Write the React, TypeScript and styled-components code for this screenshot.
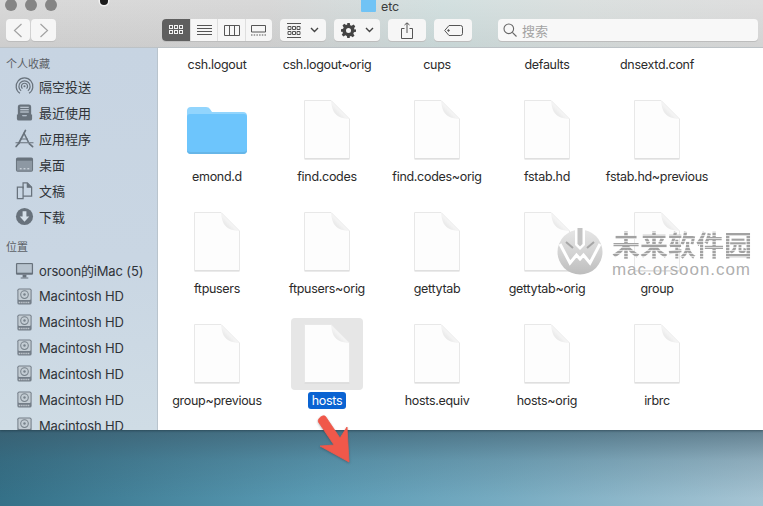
import React from 'react';
import styled, { createGlobalStyle } from 'styled-components';

const GlobalStyle = createGlobalStyle`
  html, body {
    margin: 0;
    padding: 0;
    overflow: hidden;
  }
  body {
    font-family: Inter, "Noto Sans CJK SC", sans-serif;
  }
`;

const Page = styled.div`
  position: relative;
  width: 763px;
  height: 506px;
  overflow: hidden;
  display: flex;
  flex-direction: column;
`;

const FinderWindow = styled.div`
  position: relative;
  z-index: 1;
  height: 430px;
  display: flex;
  flex-direction: column;
  flex: none;
  box-shadow: 0 1px 2px rgba(20, 40, 50, 0.45);
`;

const Chrome = styled.div`
  height: 48px;
  flex: none;
  display: flex;
  flex-direction: column;
  background:
    linear-gradient(180deg, rgba(255, 255, 255, 0.12) 0%, rgba(0, 0, 0, 0.03) 100%),
    linear-gradient(90deg, #d4d4d4 0%, #d3d3d3 35%, #cddcdc 58%, #d6dcdb 75%, #dadada 100%);
  box-shadow: inset 0 -1px 0 #bcc2c6;
`;

const TitleBar = styled.div`
  height: 19px;
  display: grid;
  grid-template-columns: 1fr auto 1fr;
  align-items: start;
`;

const Lights = styled.div`
  display: flex;
  gap: 8px;
  margin: -1px 0 0 5px;
`;

const Light = styled.span`
  width: 12px;
  height: 12px;
  border-radius: 50%;
  background: #858585;
`;

const Title = styled.div`
  display: flex;
  align-items: flex-start;
  gap: 5px;
  margin-right: 3px;
  font-size: 12.5px;
  line-height: 13px;
  letter-spacing: -0.2px;
  color: #3c3c3c;
`;

const Toolbar = styled.div`
  display: flex;
  align-items: flex-start;
  padding-left: 6px;
`;

const Btn = styled.div<{ $w: number; $ml?: number }>`
  width: ${({ $w }) => $w}px;
  height: 22px;
  margin-left: ${({ $ml }) => $ml || 0}px;
  flex: none;
  display: flex;
  align-items: center;
  justify-content: center;
  gap: ${({ $w }) => ($w > 40 ? 9 : 0)}px;
  background: #f6f6f6;
  border-radius: 4px;
  box-shadow: 0 1px 0 #bdbdbd;
  color: #555;
`;

const Segmented = styled.div`
  margin-left: 106px;
  width: 110px;
  height: 22px;
  flex: none;
  display: flex;
  border-radius: 4px;
  overflow: hidden;
  background: #f6f6f6;
  box-shadow: 0 1px 0 #bdbdbd;
`;

const Segment = styled.div<{ $on?: boolean; $w: number }>`
  width: ${({ $w }) => $w}px;
  display: flex;
  align-items: center;
  justify-content: center;
  background: ${({ $on }) => ($on ? '#5f5f5f' : 'transparent')};
  color: ${({ $on }) => ($on ? '#f2f2f2' : '#555')};
  border-left: ${({ $on }) => ($on ? 'none' : '1px solid #dedede')};
`;

const SearchBox = styled.div`
  margin-left: 26px;
  width: 260px;
  height: 22px;
  flex: none;
  display: flex;
  align-items: center;
  gap: 5px;
  padding-left: 5px;
  box-sizing: border-box;
  background: #f8f8f8;
  border-radius: 4px;
  box-shadow: 0 1px 0 #bdbdbd;
  font-size: 13px;
  color: #a3a3a3;
`;

const Body = styled.div`
  flex: 1;
  min-height: 0;
  display: flex;
`;

const Sidebar = styled.aside`
  width: 158px;
  flex: none;
  overflow: hidden;
  background: linear-gradient(180deg, #c7d4e2 0%, #c9d6e3 55%, #cfdce5 100%);
  box-shadow: inset -1px 0 0 #b9c4cd;
`;

const SideHeader = styled.div<{ $mt: number }>`
  height: 20px;
  margin-top: ${({ $mt }) => $mt}px;
  padding-left: 6px;
  font-size: 11px;
  line-height: 20px;
  color: #5c6166;
`;

const SideItem = styled.div<{ $tight?: boolean }>`
  height: 25.9px;
  display: flex;
  align-items: center;
  gap: 5px;
  padding-left: 15px;
  font-size: 13px;
  color: #2f3338;
  white-space: nowrap;
  letter-spacing: ${({ $tight }) => ($tight ? '-0.15px' : '0')};
`;

const SideIcon = styled.svg`
  width: 19px;
  height: 19px;
  flex: none;
  color: #68727c;
`;

const Main = styled.main`
  flex: 1;
  min-width: 0;
  overflow: hidden;
  background: #fff;
`;

const FileGrid = styled.div`
  margin-top: -66px;
  padding-left: 4px;
  display: grid;
  grid-template-columns: repeat(5, 110px);
  grid-auto-rows: 112px;
`;

const Cell = styled.div`
  display: flex;
  flex-direction: column;
  align-items: center;
`;

const Tile = styled.div<{ $selected?: boolean }>`
  width: 72px;
  height: 72px;
  display: flex;
  align-items: center;
  justify-content: center;
  border-radius: 4px;
  background: ${({ $selected }) => ($selected ? '#e6e6e6' : 'transparent')};
`;

const FileLabel = styled.div<{ $selected?: boolean }>`
  margin-top: 2px;
  height: 17px;
  padding: 0 4px;
  border-radius: 3px;
  font-size: 12.5px;
  line-height: 18px;
  letter-spacing: -0.3px;
  white-space: nowrap;
  color: ${({ $selected }) => ($selected ? '#fff' : '#2b2b2b')};
  background: ${({ $selected }) => ($selected ? '#0a63d2' : 'transparent')};
`;

const Desktop = styled.div`
  flex: 1;
  background:
    linear-gradient(180deg, rgba(60, 88, 104, 0.62) 0%, rgba(60, 88, 104, 0.22) 40%, rgba(60, 88, 104, 0) 90%),
    linear-gradient(100deg, #336f86 0%, #5a9bb4 42%, #76abc1 66%, #a6c4d3 100%);
`;

const Arrow = styled.svg`
  position: absolute;
  z-index: 2;
  left: 315px;
  top: 412px;
  width: 40px;
  height: 54px;
  filter: drop-shadow(0 1px 1px rgba(30, 40, 50, 0.35));
`;

const CursorDot = styled.div`
  position: absolute;
  z-index: 2;
  left: 100px;
  top: -3px;
  width: 8px;
  height: 8px;
  border-radius: 50%;
  background: #1c1c1c;
  box-shadow: 0 0 0 1.5px #f1f1f1;
`;

const Watermark = styled.div`
  position: absolute;
  z-index: 2;
  left: 557px;
  top: 227px;
  display: flex;
  gap: 9px;
`;

const MarkText = styled.div`
  display: flex;
  flex-direction: column;
  padding-top: 3px;
`;

const MarkCn = styled.div`
  height: 33px;
  font-size: 28px;
  line-height: 33px;
  font-weight: 700;
  white-space: nowrap;
  color: transparent;
  background: repeating-linear-gradient(180deg, #a2a2a2 0 2px, #dedede 2px 3px);
  -webkit-background-clip: text;
  background-clip: text;
`;

const MarkEn = styled.div`
  font-family: "Liberation Sans", sans-serif;
  font-size: 17px;
  line-height: 14px;
  letter-spacing: 0.95px;
  color: rgba(165, 165, 165, 0.9);
  text-shadow: 0 1px 0 #fff;
  white-space: nowrap;
`;

const DocIcon = () => (
  <svg width="50" height="62" viewBox="0 0 50 62">
    <defs>
      <linearGradient id="fold" x1="0" y1="1" x2="1" y2="0">
        <stop offset="0" stopColor="#d9d9d9" />
        <stop offset="0.45" stopColor="#f4f4f4" />
        <stop offset="1" stopColor="#e2e2e2" />
      </linearGradient>
    </defs>
    <path d="M2.5 1.5H29L47.5 20V59.500H2.5Z" fill="#fdfdfd" stroke="#e8e8e8" strokeWidth="1" />
    <path d="M2.5 60H47.5" stroke="#d6d6d6" strokeWidth="1" />
    <path d="M29 1.5C30 10 31 19 47.5 20C40 13 35 8 29 1.500Z" fill="url(#fold)" />
  </svg>
);

const FolderIcon = () => (
  <svg width="62" height="50" viewBox="0 0 62 50">
    <path d="M1 6Q1 2 5 2H20Q23 2 24 4L26 7H57Q61 7 61 11V20H1Z" fill="#92d5fd" />
    <path d="M1 12Q1 9 4 9H58Q61 9 61 12V45Q61 49 57 49H5Q1 49 1 45Z" fill="#6dc5fc" />
    <path d="M1 44V45Q1 49 5 49H57Q61 49 61 45V44Q61 47 57 47H5Q1 47 1 44Z" fill="#66b6e8" />
  </svg>
);

const AirDropIcon = () => (
  <SideIcon viewBox="0 0 20 20" fill="none" stroke="currentColor" strokeWidth="1.3">
    <path d="M5.2 17.2A8.8 8.8 0 1 1 14.8 17.2" />
    <path d="M6.4 14.6A5.9 5.9 0 1 1 13.6 14.6" />
    <path d="M7.9 12.2A3.2 3.2 0 1 1 12.1 12.2" />
    <circle cx="10" cy="9.7" r="1.1" fill="currentColor" stroke="none" />
  </SideIcon>
);

const RecentsIcon = () => (
  <SideIcon viewBox="0 0 20 20">
    <path d="M3 4Q3 1.5 5.5 1.5H14.5Q17 1.5 17 4V13H3Z" fill="currentColor" />
    <path d="M5.5 4.5H14.5M5.5 7H14.5M5.5 9.5H14.5" stroke="#d3dde7" strokeWidth="1.1" />
    <path d="M2 12H7L8 14H12L13 12H18V16.5Q18 18.5 16 18.5H4Q2 18.5 2 16.5Z" fill="currentColor" />
  </SideIcon>
);

const AppsIcon = () => (
  <SideIcon viewBox="0 0 20 20" fill="none" stroke="currentColor" strokeLinecap="round">
    <path d="M11 1.5L4 15" strokeWidth="1.8" />
    <path d="M9.5 4.5L14 13.5" strokeWidth="1.6" />
    <path d="M1 14.5H19" strokeWidth="1.2" />
    <path d="M6 10.5H13" strokeWidth="1.2" />
    <path d="M1.2 18.5L4 15M15 15.5L18.5 18.5" strokeWidth="1.8" />
  </SideIcon>
);

const DesktopIcon = () => (
  <SideIcon viewBox="0 0 20 20">
    <rect x="1" y="2.5" width="18" height="15" rx="1.8" fill="currentColor" />
    <rect x="2" y="6" width="16" height="10.5" fill="#8d98a3" />
    <path d="M5 14.5H7M9 14.5H11M13 14.5H15" stroke="#dfe6ec" strokeWidth="1" />
  </SideIcon>
);

const DocsIcon = () => (
  <SideIcon viewBox="0 0 20 20" fill="none" stroke="currentColor" strokeWidth="1.3">
    <path d="M2.5 6.5H8.5V18.5H2.5Z" />
    <path d="M8.5 8V2H13L17.5 6.5V16H8.5" />
    <path d="M13 2V6.5H17.5" fill="currentColor" />
  </SideIcon>
);

const DownloadIcon = () => (
  <SideIcon viewBox="0 0 20 20">
    <circle cx="10" cy="10" r="9" fill="currentColor" />
    <path d="M8 4.5H12V10H15L10 15.5L5 10H8Z" fill="#d5dfe8" />
  </SideIcon>
);

const ImacIcon = () => (
  <SideIcon viewBox="0 0 20 20">
    <rect x="1" y="2" width="18" height="12.5" rx="1.2" fill="currentColor" />
    <rect x="2.3" y="3.3" width="15.4" height="9" fill="#b7c3ce" />
    <path d="M8 14.5H12V17H8ZM6 17.3H14V18.3H6Z" fill="currentColor" />
  </SideIcon>
);

const DiskIcon = () => (
  <SideIcon viewBox="0 0 20 20">
    <rect x="2.5" y="1.5" width="15" height="17" rx="2" fill="#747e88" />
    <rect x="3.6" y="2.6" width="12.8" height="11" rx="1" fill="#c3ccd3" />
    <circle cx="10" cy="8" r="4" fill="none" stroke="#78828b" strokeWidth="1.1" />
    <circle cx="10" cy="8" r="1.3" fill="#78828b" />
    <path d="M4 16.3H16" stroke="#dbe1e6" strokeWidth="1.4" strokeDasharray="1 1" />
  </SideIcon>
);

const GridGlyph = ({ rows = 2 }: { rows?: number }) => (
  <svg width="14" height={rows * 5} viewBox={`0 0 14 ${rows * 5}`} fill="none" stroke="currentColor" strokeWidth="1">
    {Array.from({ length: rows * 3 }).map((_, i) => (
      <rect key={i} x={0.5 + (i % 3) * 5} y={0.5 + Math.floor(i / 3) * 5} width="3" height="3" />
    ))}
  </svg>
);

const Chevron = () => (
  <svg width="9" height="6" viewBox="0 0 9 6" fill="none" stroke="#444" strokeWidth="1.4">
    <path d="M1 1L4.5 4.5L8 1" />
  </svg>
);

const sideTop = [
  { icon: <AirDropIcon />, label: '隔空投送' },
  { icon: <RecentsIcon />, label: '最近使用' },
  { icon: <AppsIcon />, label: '应用程序' },
  { icon: <DesktopIcon />, label: '桌面' },
  { icon: <DocsIcon />, label: '文稿' },
  { icon: <DownloadIcon />, label: '下载' },
];

const sideBottom = [
  { icon: <ImacIcon />, label: 'orsoon的iMac (5)' },
  ...Array.from({ length: 6 }).map(() => ({ icon: <DiskIcon />, label: 'Macintosh HD' })),
];

const files = [
  'csh.logout', 'csh.logout~orig', 'cups', 'defaults', 'dnsextd.conf',
  'emond.d', 'find.codes', 'find.codes~orig', 'fstab.hd', 'fstab.hd~previous',
  'ftpusers', 'ftpusers~orig', 'gettytab', 'gettytab~orig', 'group',
  'group~previous', 'hosts', 'hosts.equiv', 'hosts~orig', 'irbrc',
];

export default function App() {
  return (
    <Page>
      <GlobalStyle />
      <FinderWindow>
        <Chrome>
          <TitleBar>
            <Lights>
              <Light />
              <Light />
              <Light />
            </Lights>
            <Title>
              <svg width="15" height="12" viewBox="0 0 15 12">
                <path d="M0 0H15V11Q15 12 14 12H1Q0 12 0 11Z" fill="#70c3f5" />
              </svg>
              etc
            </Title>
          </TitleBar>
          <Toolbar>
            <Btn $w={24}>
              <svg width="10" height="15" viewBox="0 0 10 15" fill="none" stroke="#a2a2a2" strokeWidth="1.2">
                <path d="M8.5 1L1.5 7.5L8.5 14" />
              </svg>
            </Btn>
            <Btn $w={25} $ml={1}>
              <svg width="10" height="15" viewBox="0 0 10 15" fill="none" stroke="#a2a2a2" strokeWidth="1.2">
                <path d="M1.5 1L8.5 7.5L1.5 14" />
              </svg>
            </Btn>
            <Segmented>
              <Segment $on $w={29}>
                <GridGlyph />
              </Segment>
              <Segment $w={27}>
                <svg width="15" height="11" viewBox="0 0 15 11" stroke="currentColor" strokeWidth="1">
                  <path d="M0 .5H15M0 3.5H15M0 6.5H15M0 9.5H15" />
                </svg>
              </Segment>
              <Segment $w={27}>
                <svg width="16" height="11" viewBox="0 0 16 11" fill="none" stroke="currentColor" strokeWidth="1">
                  <path d="M.5 .5H15.5V10.5H.5ZM5.5 .5V10.5M10.5 .5V10.5" />
                </svg>
              </Segment>
              <Segment $w={27}>
                <svg width="15" height="11" viewBox="0 0 15 11" fill="none" stroke="currentColor" strokeWidth="1">
                  <path d="M.5 .5H14.5V7H.5Z" />
                  <path d="M0 10H15" strokeDasharray="1.5 1.2" />
                </svg>
              </Segment>
            </Segmented>
            <Btn $w={46} $ml={8}>
              <svg width="14" height="15" viewBox="0 0 14 15" fill="none" stroke="#555" strokeWidth="1">
                <path d="M0 .5H14M0 14.5H14" />
                <path d="M1 3.5H4V6.5H1ZM5.5 3.5H8.5V6.5H5.5ZM10 3.5H13V6.5H10ZM1 8.5H4V11.5H1ZM5.5 8.5H8.5V11.5H5.5ZM10 8.5H13V11.5H10Z" />
              </svg>
              <Chevron />
            </Btn>
            <Btn $w={46} $ml={8}>
              <svg width="15" height="15" viewBox="0 0 24 24" fill="#444">
                <path fillRule="evenodd" d="M10 0H14L14.7 3.4 17 4.4 20 2.5 22.8 5.3 20.9 8.2 21.9 10.6 24 10V14L20.7 14.7 19.7 17 21.6 20 18.8 22.8 15.9 20.9 14 21.7 14 24H10L9.3 20.7 7 19.7 4 21.6 1.200 18.8 3.100 15.900 2.300 14 0 14V10L3.300 9.300 4.300 7 2.400 4 5.200 1.200 8.100 3.100 10 2.300ZM12 8A4 4 0 1 0 12 16 4 4 0 1 0 12 8Z" />
              </svg>
              <Chevron />
            </Btn>
            <Btn $w={38} $ml={8}>
              <svg width="12" height="17" viewBox="0 0 12 17" fill="none" stroke="#555" strokeWidth="1">
                <path d="M3.500 6.500H.5V16.500H11.500V6.500H8.500" />
                <path d="M6 11V1M3.500 3L6 .8 8.500 3" />
              </svg>
            </Btn>
            <Btn $w={38} $ml={8}>
              <svg width="19" height="11" viewBox="0 0 19 11" fill="none" stroke="#555" strokeWidth="1">
                <path d="M5 .5H16.500Q18.500 .5 18.500 2.500V8.500Q18.500 10.500 16.500 10.500H5L.7 5.500Z" />
                <circle cx="4.500" cy="5.500" r=".8" fill="#555" />
              </svg>
            </Btn>
            <SearchBox>
              <svg width="14" height="14" viewBox="0 0 14 14" fill="none" stroke="#666" strokeWidth="1.1">
                <circle cx="5.800" cy="5.800" r="4.800" />
                <path d="M9.300 9.300L13.500 13.500" />
              </svg>
              搜索
            </SearchBox>
          </Toolbar>
        </Chrome>
        <Body>
          <Sidebar>
            <SideHeader $mt={6}>个人收藏</SideHeader>
            {sideTop.map((item) => (
              <SideItem key={item.label}>
                {item.icon}
                {item.label}
              </SideItem>
            ))}
            <SideHeader $mt={8}>位置</SideHeader>
            {sideBottom.map((item, i) => (
              <SideItem key={i} $tight>
                {item.icon}
                {item.label}
              </SideItem>
            ))}
          </Sidebar>
          <Main>
            <FileGrid>
              {files.map((name) => (
                <Cell key={name}>
                  <Tile $selected={name === 'hosts'}>
                    {name === 'emond.d' ? <FolderIcon /> : <DocIcon />}
                  </Tile>
                  <FileLabel $selected={name === 'hosts'}>{name}</FileLabel>
                </Cell>
              ))}
            </FileGrid>
          </Main>
        </Body>
      </FinderWindow>
      <Desktop />
      <CursorDot />
      <Watermark>
        <svg width="46" height="50" viewBox="0 0 46 50">
          <defs>
            <linearGradient id="disc" x1="0" y1="0" x2="0" y2="1">
              <stop offset="0" stopColor="#e6e6e6" />
              <stop offset="0.55" stopColor="#d2d2d2" />
              <stop offset="1" stopColor="#bdbdbd" />
            </linearGradient>
          </defs>
          <circle cx="23" cy="25" r="22.500" fill="url(#disc)" />
          <path d="M18 1H28V18L23 23 18 18Z" fill="#fff" />
          <path d="M20.500 1H25.500V17L23 19.500 20.500 17Z" fill="#c4c4c4" />
          <path d="M9 15L16 21M37 15L30 21" stroke="#a6a6a6" strokeWidth="2" />
          <path d="M3 17L13 36 19.500 28 23 32 26.500 28 33 36 43 17" fill="none" stroke="#fff" strokeWidth="3" />
        </svg>
        <MarkText>
          <MarkCn>未来软件园</MarkCn>
          <MarkEn>mac.orsoon.com</MarkEn>
        </MarkText>
      </Watermark>
      <Arrow viewBox="0 0 40 54">
        <path d="M3.500 10C2 7 8 2 10.500 4.500L25 26 32 15 34 50 5 34 19 33Z" fill="#f0584a" stroke="#f0584a" strokeWidth="0.8" strokeLinejoin="round" />
      </Arrow>
    </Page>
  );
}
